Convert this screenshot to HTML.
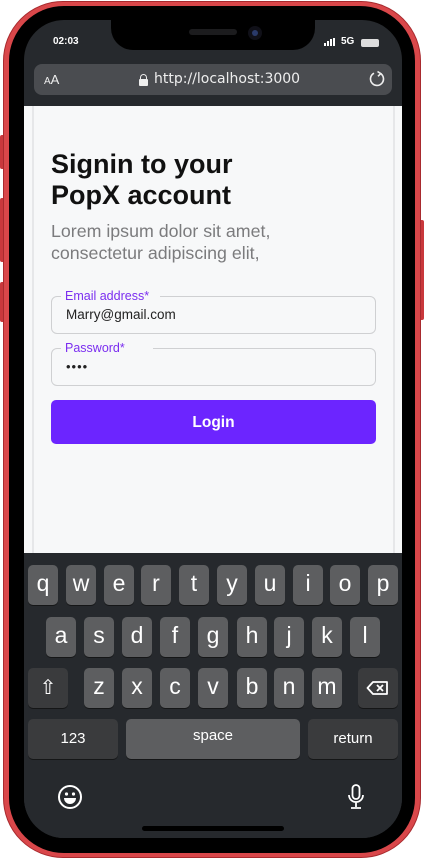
<!DOCTYPE html>
<html><head><meta charset="utf-8"><style>
*{margin:0;padding:0;box-sizing:border-box}
body{width:424px;height:859px;background:#fff;position:relative;overflow:hidden;font-family:"Liberation Sans",sans-serif}
.btn{position:absolute;background:#c9383c;border-radius:2px}
.frame{position:absolute;left:3px;top:1px;width:418px;height:857px;border-radius:60px;background:#d9474a;border:1px solid #a82a2e}
.bezel{position:absolute;left:9px;top:6px;width:406px;height:847px;border-radius:55px;background:#000}
.screen{position:absolute;left:24px;top:20px;width:378px;height:818px;border-radius:40px;overflow:hidden;background:#26292d}
.notch{position:absolute;left:111px;top:20px;width:204px;height:30px;background:#000;border-radius:0 0 22px 22px}
.abs{position:absolute}
.key{position:absolute;width:30px;height:40px;background:#5d5e60;border-radius:5px;color:#fff;font-size:23px;text-align:center;line-height:36px;box-shadow:0 1px 0 #151617}
.dk{background:#3a3b3d}
</style></head><body>
<div class="btn" style="left:0;top:135px;width:5px;height:34px"></div>
<div class="btn" style="left:0;top:198px;width:5px;height:64px"></div>
<div class="btn" style="left:0;top:282px;width:5px;height:40px"></div>
<div class="btn" style="left:419px;top:220px;width:5px;height:100px"></div>
<div class="frame"></div>
<div class="bezel"></div>
<div class="screen">
  <div class="abs" style="left:29px;top:16px;color:#fff;font-weight:bold;font-size:10px">02:03</div>
  <div class="abs" style="left:300px;top:18px;width:14px;height:8px">
    <div class="abs" style="left:0;top:5px;width:2px;height:3px;background:#fff"></div>
    <div class="abs" style="left:3px;top:3px;width:2px;height:5px;background:#fff"></div>
    <div class="abs" style="left:6px;top:1px;width:2px;height:7px;background:#fff"></div>
    <div class="abs" style="left:9px;top:0;width:2px;height:8px;background:#fff"></div>
  </div>
  <div class="abs" style="left:317px;top:16px;color:#fff;font-weight:bold;font-size:10px">5G</div>
  <div class="abs" style="left:337px;top:19px;width:18px;height:8px;border-radius:2px;background:#ddd"></div>
  <div class="abs" style="left:10px;top:44px;width:358px;height:31px;background:#4a4c50;border-radius:8px"></div>
  <div class="abs" style="left:20px;top:52px;color:#eee;font-size:13px"><span style="font-size:10px">A</span>A</div>
  <div class="abs" style="left:115px;top:54px;width:9px;height:12px">
    <div class="abs" style="left:1px;top:0;width:7px;height:8px;border:1.5px solid #eee;border-radius:4px 4px 0 0"></div>
    <div class="abs" style="left:0;top:5px;width:9px;height:7px;background:#eee;border-radius:1px"></div>
  </div>
  <div class="abs" style="left:130px;top:51px;color:#eee;font-size:14px;font-family:'DejaVu Sans',sans-serif">http://localhost:3000</div>
  <svg class="abs" style="left:344px;top:50px" width="18" height="18" viewBox="0 0 18 18"><path d="M12.5 3.5 A6.5 6.5 0 1 1 6 3.2" fill="none" stroke="#eee" stroke-width="1.6"/><path d="M9.5 1.5 L12.8 3.6 L10 6.3" fill="none" stroke="#eee" stroke-width="1.6"/></svg>
  <div class="abs" style="left:0;top:86px;width:378px;height:447px;background:#f7f8f9">
    <div class="abs" style="left:8px;top:0;width:2px;height:447px;background:#e6e7e9"></div>
    <div class="abs" style="left:369px;top:0;width:2px;height:447px;background:#e6e7e9"></div>
    <div class="abs" style="left:27px;top:43px;font-size:27px;font-weight:bold;line-height:31px;color:#111">Signin to your<br>PopX account</div>
    <div class="abs" style="left:27px;top:114px;font-size:17.8px;line-height:22px;color:#7b7b7d">Lorem ipsum dolor sit amet,<br>consectetur adipiscing elit,</div>
    <div class="abs" style="left:27px;top:190px;width:325px;height:38px;border:1px solid #cfd0d2;border-radius:6px"></div>
    <div class="abs" style="left:37px;top:182px;padding:0 4px;background:#f7f8f9;color:#7b2ef0;font-size:12.5px;line-height:16px">Email address*&nbsp;&nbsp;</div>
    <div class="abs" style="left:42px;top:201px;color:#222;font-size:13.5px">Marry@gmail.com</div>
    <div class="abs" style="left:27px;top:242px;width:325px;height:38px;border:1px solid #cfd0d2;border-radius:6px"></div>
    <div class="abs" style="left:37px;top:234px;padding:0 4px;background:#f7f8f9;color:#7b2ef0;font-size:12.5px;line-height:16px">Password*&nbsp;&nbsp;&nbsp;&nbsp;&nbsp;&nbsp;&nbsp;</div>
    <div class="abs" style="left:42px;top:253px;color:#222;font-size:13px;letter-spacing:1px">••••</div>
    <div class="abs" style="left:27px;top:294px;width:325px;height:44px;background:#6c25ff;border-radius:5px;color:#fff;font-weight:bold;font-size:15.5px;text-align:center;line-height:46px">Login</div>
  </div>
  <div class="abs" style="left:0;top:533px;width:378px;height:285px;background:#26292d"></div>
  <div class="key" style="left:4px;top:545px">q</div>
  <div class="key" style="left:42px;top:545px">w</div>
  <div class="key" style="left:80px;top:545px">e</div>
  <div class="key" style="left:117px;top:545px">r</div>
  <div class="key" style="left:155px;top:545px">t</div>
  <div class="key" style="left:193px;top:545px">y</div>
  <div class="key" style="left:231px;top:545px">u</div>
  <div class="key" style="left:269px;top:545px">i</div>
  <div class="key" style="left:306px;top:545px">o</div>
  <div class="key" style="left:344px;top:545px">p</div>
  <div class="key" style="left:22px;top:597px">a</div>
  <div class="key" style="left:60px;top:597px">s</div>
  <div class="key" style="left:98px;top:597px">d</div>
  <div class="key" style="left:136px;top:597px">f</div>
  <div class="key" style="left:174px;top:597px">g</div>
  <div class="key" style="left:213px;top:597px">h</div>
  <div class="key" style="left:250px;top:597px">j</div>
  <div class="key" style="left:288px;top:597px">k</div>
  <div class="key" style="left:326px;top:597px">l</div>
  <div class="key dk" style="left:4px;top:648px;width:40px;font-size:20px;line-height:40px">⇧</div>
  <div class="key" style="left:60px;top:648px">z</div>
  <div class="key" style="left:98px;top:648px">x</div>
  <div class="key" style="left:136px;top:648px">c</div>
  <div class="key" style="left:174px;top:648px">v</div>
  <div class="key" style="left:213px;top:648px">b</div>
  <div class="key" style="left:250px;top:648px">n</div>
  <div class="key" style="left:288px;top:648px">m</div>
  <div class="key dk" style="left:334px;top:648px;width:40px"><svg width="24" height="16" viewBox="0 0 24 16" style="margin-top:12px"><path d="M7 2 H21 V14 H7 L1.5 8 Z" fill="none" stroke="#fff" stroke-width="1.8" stroke-linejoin="round"/><path d="M11 5 L17 11 M17 5 L11 11" stroke="#fff" stroke-width="1.8"/></svg></div>
  <div class="key dk" style="left:4px;top:699px;width:90px;font-size:15px;line-height:40px">123</div>
  <div class="key" style="left:102px;top:699px;width:174px;font-size:15px;line-height:34px">space</div>
  <div class="key dk" style="left:284px;top:699px;width:90px;font-size:15px;line-height:40px">return</div>
  <svg class="abs" style="left:33px;top:764px" width="26" height="26" viewBox="0 0 26 26"><circle cx="13" cy="13" r="11" fill="none" stroke="#fff" stroke-width="2"/><circle cx="9.5" cy="10" r="1.6" fill="#fff"/><circle cx="16.5" cy="10" r="1.6" fill="#fff"/><path d="M7 14 H19 A6 6 0 0 1 7 14 Z" fill="#fff"/></svg>
  <svg class="abs" style="left:322px;top:763px" width="20" height="28" viewBox="0 0 20 28"><rect x="6.5" y="2" width="7" height="14" rx="3.5" fill="none" stroke="#fff" stroke-width="1.8"/><path d="M3 12 A7 7 0 0 0 17 12 M10 19 V24 M5 25 H15" fill="none" stroke="#fff" stroke-width="1.8"/></svg>
  <div class="abs" style="left:118px;top:806px;width:142px;height:5px;background:#000;border-radius:3px"></div>
</div>
<div class="notch"></div>
<div class="abs" style="left:189px;top:29px;width:48px;height:6px;background:#1c1c1e;border-radius:3px"></div>
<div class="abs" style="left:248px;top:26px;width:14px;height:14px;background:#101018;border-radius:50%"><div style="margin:4px;width:6px;height:6px;border-radius:50%;background:#2a3a6a"></div></div>
</body></html>
